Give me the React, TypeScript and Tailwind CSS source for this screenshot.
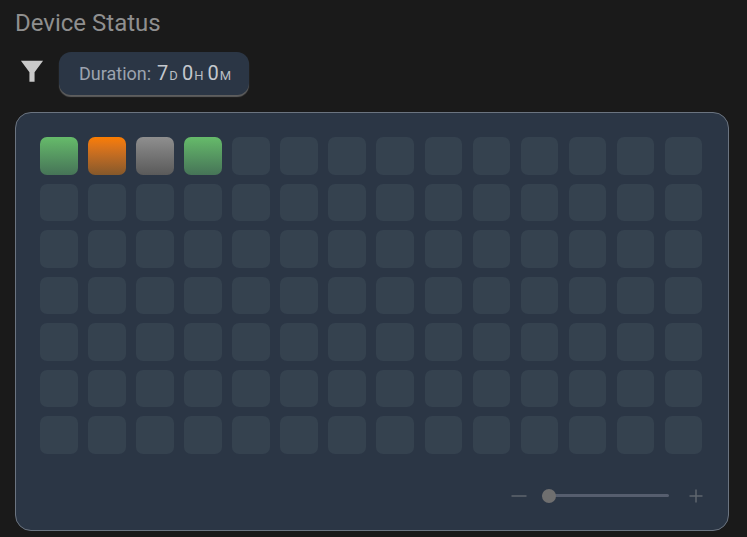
export default function App() {
  const cells = Array.from({ length: 98 }, (_, i) => i);
  const special: Record<number, string> = {
    0: "bg-gradient-to-b from-[#66bb6a] to-[#467457]",
    1: "bg-gradient-to-b from-[#fb7d00] to-[#85582a]",
    2: "bg-gradient-to-b from-[#8f8f8f] to-[#5a5a5a]",
    3: "bg-gradient-to-b from-[#66bb6a] to-[#467457]",
  };
  return (
    <div className="w-[747px] h-[537px] overflow-hidden bg-[#1a1a1a] font-['Roboto',sans-serif]">
      <div className="pl-[15px] pr-[18px] pt-[8px]">
        <h1 className="text-[24px] leading-[30px] font-normal text-[#8f8f8f]">Device Status</h1>
        <div className="flex items-center mt-[14px] h-[43px]">
          <div className="w-[44px] flex items-center pl-[3px] pb-[5px]">
            <svg width="28" height="28" viewBox="0 0 24 24">
              <path d="M2.5 3.2h19L14.2 13v8.2L9.8 21.2V13z" fill="#c9c9c9" />
            </svg>
          </div>
          <div className="flex items-baseline h-[43px] w-[190px] pl-[20px] pt-[10px] rounded-[12px] bg-[#2b3645] shadow-[0_2px_1px_#5e5e5e] text-[18px] leading-[22px] text-[#9ca3af]">
            <span>Duration:</span>
            <span className="ml-[6px] text-[20px] text-[#c4c8cd]">7</span>
            <span className="text-[13px] text-[#b9bdc2] ml-[1px]">D</span>
            <span className="ml-[4px] text-[20px] text-[#c4c8cd]">0</span>
            <span className="text-[13px] text-[#b9bdc2] ml-[1px]">H</span>
            <span className="ml-[4px] text-[20px] text-[#c4c8cd]">0</span>
            <span className="text-[13px] text-[#b9bdc2] ml-[1px]">M</span>
          </div>
        </div>
        <div className="mt-[17px] h-[419px] rounded-[16px] border border-[#6b7480] bg-[#2b3645] pl-[24px] pr-[25px] pt-[24px]">
          <div className="grid grid-cols-[repeat(14,37.5px)] auto-rows-[37.5px] gap-x-[10.575px] gap-y-[9px]">
            {cells.map((i) => (
              <div key={i} className={`rounded-[7px] ${i === 0 ? "h-[38px]" : ""} ${special[i] ?? "bg-[#35424f]"}`} />
            ))}
          </div>
          <div className="flex items-center justify-end mt-[34px]">
            <svg width="16" height="16" viewBox="0 0 16 16" stroke="#5f666e" strokeWidth="1.5" fill="none"><path d="M0.5 8h15" /></svg>
            <div className="relative w-[127px] h-[14px] ml-[15px] flex items-center">
              <div className="w-full h-[3px] rounded-full bg-[#565e6e]" />
              <div className="absolute left-0 top-0 w-[14px] h-[14px] rounded-full bg-[#6f6f6f]" />
            </div>
            <svg className="ml-[20px]" width="14" height="14" viewBox="0 0 14 14" stroke="#5f666e" strokeWidth="1.5" fill="none"><path d="M0.5 7h13M7 0.5v13" /></svg>
          </div>
        </div>
      </div>
    </div>
  );
}
